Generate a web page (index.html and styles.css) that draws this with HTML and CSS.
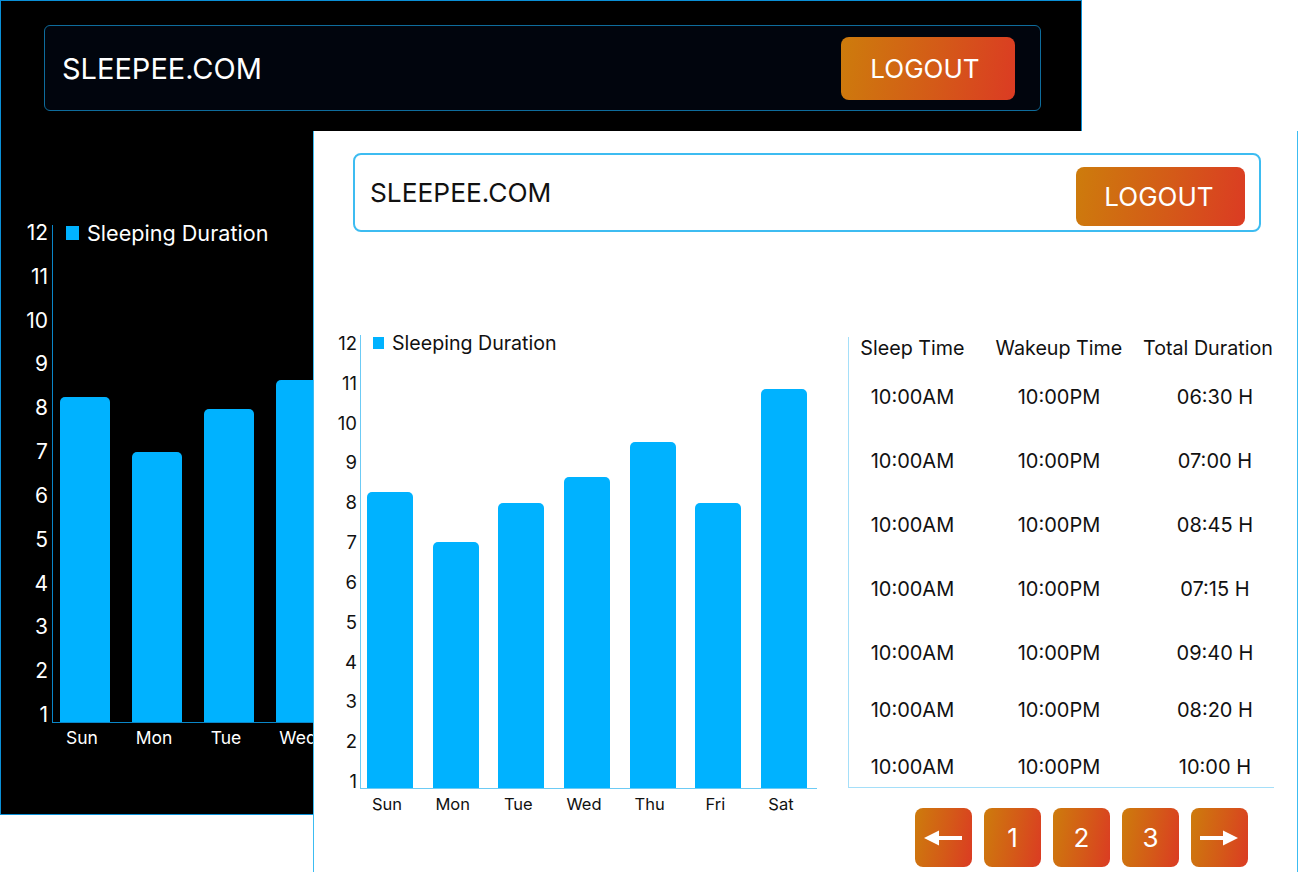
FILE: index.html
```html
<!DOCTYPE html>
<html lang="en">
<head>
<meta charset="utf-8">
<title>Sleepee</title>
<link rel="stylesheet" href="styles.css">
</head>
<body>
<div class="desk">
  <section class="win win--dark">
    <header class="topbar topbar--dark">
      <span class="brand brand--dark">SLEEPEE.COM</span>
      <button class="logout logout--dark">LOGOUT</button>
    </header>
    <div class="chart chart--dark">
      <div class="yaxis">
        <span>12</span><span>11</span><span>10</span><span>9</span><span>8</span><span>7</span><span>6</span><span>5</span><span>4</span><span>3</span><span>2</span><span>1</span>
      </div>
      <div class="plot">
        <div class="legend"><i class="swatch"></i><span>Sleeping Duration</span></div>
        <div class="bars">
          <div class="bar" style="height:325px"></div>
          <div class="bar" style="height:270px"></div>
          <div class="bar" style="height:313px"></div>
          <div class="bar" style="height:342px"></div>
        </div>
      </div>
      <div class="xlabels">
        <span>Sun</span><span>Mon</span><span>Tue</span><span>Wed</span>
      </div>
    </div>
  </section>

  <section class="win win--light">
    <header class="topbar topbar--light">
      <span class="brand brand--light">SLEEPEE.COM</span>
      <button class="logout logout--light">LOGOUT</button>
    </header>
    <div class="content">
      <div class="chart chart--light">
        <div class="yaxis">
          <span>12</span><span>11</span><span>10</span><span>9</span><span>8</span><span>7</span><span>6</span><span>5</span><span>4</span><span>3</span><span>2</span><span>1</span>
        </div>
        <div class="plot">
          <div class="legend"><i class="swatch"></i><span>Sleeping Duration</span></div>
          <div class="bars">
            <div class="bar" style="height:296px"></div>
            <div class="bar" style="height:246px"></div>
            <div class="bar" style="height:285px"></div>
            <div class="bar" style="height:311px"></div>
            <div class="bar" style="height:346px"></div>
            <div class="bar" style="height:285px"></div>
            <div class="bar" style="height:399px"></div>
          </div>
        </div>
        <div class="xlabels">
          <span>Sun</span><span>Mon</span><span>Tue</span><span>Wed</span><span>Thu</span><span>Fri</span><span>Sat</span>
        </div>
      </div>

      <div class="side">
        <div class="table">
          <div class="trow thead"><span>Sleep Time</span><span>Wakeup Time</span><span>Total Duration</span></div>
          <div class="trow tdata"><span>10:00AM</span><span>10:00PM</span><span>06:30 H</span></div>
          <div class="trow tdata"><span>10:00AM</span><span>10:00PM</span><span>07:00 H</span></div>
          <div class="trow tdata"><span>10:00AM</span><span>10:00PM</span><span>08:45 H</span></div>
          <div class="trow tdata"><span>10:00AM</span><span>10:00PM</span><span>07:15 H</span></div>
          <div class="trow tdata"><span>10:00AM</span><span>10:00PM</span><span>09:40 H</span></div>
          <div class="trow tdata tdata--compact"><span>10:00AM</span><span>10:00PM</span><span>08:20 H</span></div>
          <div class="trow tdata tdata--compact"><span>10:00AM</span><span>10:00PM</span><span>10:00 H</span></div>
        </div>
        <nav class="pager">
          <button class="pg" aria-label="Previous">
            <svg width="38" height="16" viewBox="0 0 38 16"><polygon points="0,8 15,0.5 15,15.5" fill="#fff"/><rect x="14" y="6" width="24" height="4" fill="#fff"/></svg>
          </button>
          <button class="pg">1</button>
          <button class="pg">2</button>
          <button class="pg">3</button>
          <button class="pg" aria-label="Next">
            <svg width="38" height="16" viewBox="0 0 38 16"><rect x="0" y="6" width="24" height="4" fill="#fff"/><polygon points="38,8 23,0.5 23,15.5" fill="#fff"/></svg>
          </button>
        </nav>
      </div>
    </div>
  </section>
</div>
</body>
</html>
```

FILE: styles.css
```css
* { box-sizing: border-box; margin: 0; padding: 0; }
html, body { background: #fff; }
body {
  font-family: Inter, "Noto Sans", "DejaVu Sans", sans-serif;
  width: 1298px;
  height: 894px;
  overflow: hidden;
}
button { font-family: inherit; border: none; cursor: pointer; }

.desk { position: relative; width: 1298px; height: 894px; }

.win { position: absolute; display: flex; flex-direction: column; }

.win--dark {
  left: 0; top: 0;
  width: 1082px; height: 815px;
  background: #000;
  color: #fff;
  border: 1px solid #0a8fd6;
  padding: 24px 40px 0 23px;
}

.win--light {
  left: 313px; top: 131px;
  width: 985px; height: 741px;
  background: #fff;
  color: #111;
  border-left: 1px solid #3cbcf2;
  border-right: 1px solid #3cbcf2;
  padding: 22px 36px 0 19px;
}

/* top bar */
.topbar {
  display: flex;
  align-items: center;
  justify-content: space-between;
  margin-left: 20px;
}
.topbar--dark {
  height: 86px;
  background: #01050d;
  border: 1px solid #0e6c9c;
  border-radius: 6px;
  padding: 0 25px 0 17px;
}
.topbar--light {
  height: 79px;
  border: 2px solid #3dbcf1;
  border-radius: 8px;
  padding: 0 14px 0 15px;
}
.brand { font-weight: 400; letter-spacing: 0; }
.brand--dark { font-size: 29px; color: #fff; }
.brand--light { font-size: 26.3px; color: #111; }

.logout {
  color: #fff;
  font-size: 26px;
  font-weight: 400;
  border-radius: 8px;
  background: linear-gradient(100deg, #cd7c0c 0%, #d45a18 55%, #db3b23 100%);
}
.logout--dark { width: 174px; height: 63px; padding-right: 6px; }
.logout--light { width: 169px; height: 59px; margin-top: 8px; padding-right: 3px; }

/* chart */
.chart { display: grid; flex-shrink: 0; }
.chart--dark {
  margin-top: 114px;
  grid-template-columns: 28px auto;
  justify-content: start;
}
.chart--light {
  grid-template-columns: 27px auto;
  justify-content: start;
  align-self: flex-start;
}

.yaxis {
  display: flex;
  flex-direction: column;
  justify-content: space-between;
  align-items: flex-end;
  line-height: 16px;
}
.chart--dark .yaxis { font-size: 21px; padding-right: 4px; color: #fff; }
.chart--light .yaxis { font-size: 18.5px; padding-right: 3px; color: #111; }

.plot {
  display: flex;
  flex-direction: column;
  border-left: 1px solid;
  border-bottom: 1px solid;
}
.chart--dark .plot {
  height: 498px;
  width: 500px;
  border-color: #0a86c8;
  padding: 0 10px 0 7px;
}
.chart--light .plot {
  height: 454px;
  border-color: #6ccbf5;
  padding: 0 10px 0 6px;
}

.legend { display: flex; align-items: center; line-height: 16px; white-space: nowrap; }
.chart--dark .legend { margin: 0 0 0 6px; font-size: 21.6px; gap: 8px; }
.chart--light .legend { margin: 0 0 0 6px; font-size: 19.6px; gap: 8px; }
.swatch { display: block; background: #00b2ff; flex-shrink: 0; }
.chart--dark .swatch { width: 13px; height: 14px; }
.chart--light .swatch { width: 11px; height: 12px; }

.bars { flex: 1; display: flex; align-items: flex-end; }
.chart--dark .bars { gap: 22px; }
.chart--light .bars { gap: 19.67px; }
.bar { background: #00b2ff; border-radius: 5px 5px 0 0; flex-shrink: 0; }
.chart--dark .bar { width: 50px; }
.chart--light .bar { width: 46px; }

.xlabels { grid-column: 2; display: flex; margin-top: 5px; line-height: 20px; font-size: 17.5px; }
.xlabels span { text-align: center; white-space: nowrap; flex-shrink: 0; }
.chart--dark .xlabels { gap: 22px; padding-left: 5px; color: #fff; }
.chart--dark .xlabels span { width: 50px; }
.chart--light .xlabels { gap: 19.67px; padding-left: 4px; font-size: 16.5px; color: #111; }
.chart--light .xlabels span { width: 46px; }

/* content area of light window */
.content {
  display: flex;
  align-items: flex-start;
  margin-top: 103px;
}

.side {
  margin-left: 31px;
  width: 426px;
  flex-shrink: 0;
  display: flex;
  flex-direction: column;
}

.table {
  margin-top: 2px;
  border-left: 1px solid #a5dff9;
  border-bottom: 1px solid #a5dff9;
  padding-bottom: 8px;
  font-size: 20px;
  color: #111;
}
.trow {
  display: grid;
  grid-template-columns: 127px 166px 1fr;
  text-align: center;
  white-space: nowrap;
}
.thead { line-height: 22px; font-size: 19.7px; }
.tdata { line-height: 24px; margin-top: 40px; }
.thead + .tdata { margin-top: 26px; }
.tdata--compact { margin-top: 33px; }
.tdata span:last-child { padding-left: 14px; }

.pager {
  display: flex;
  justify-content: flex-end;
  gap: 12px;
  margin-top: 20px;
  padding-right: 26px;
}
.pg {
  width: 57px;
  height: 59px;
  border-radius: 8px;
  color: #fff;
  font-size: 26px;
  display: flex;
  align-items: center;
  justify-content: center;
  background: linear-gradient(100deg, #cd7c0c 0%, #d45a18 55%, #db3b23 100%);
}
.pg svg { display: block; }
```
